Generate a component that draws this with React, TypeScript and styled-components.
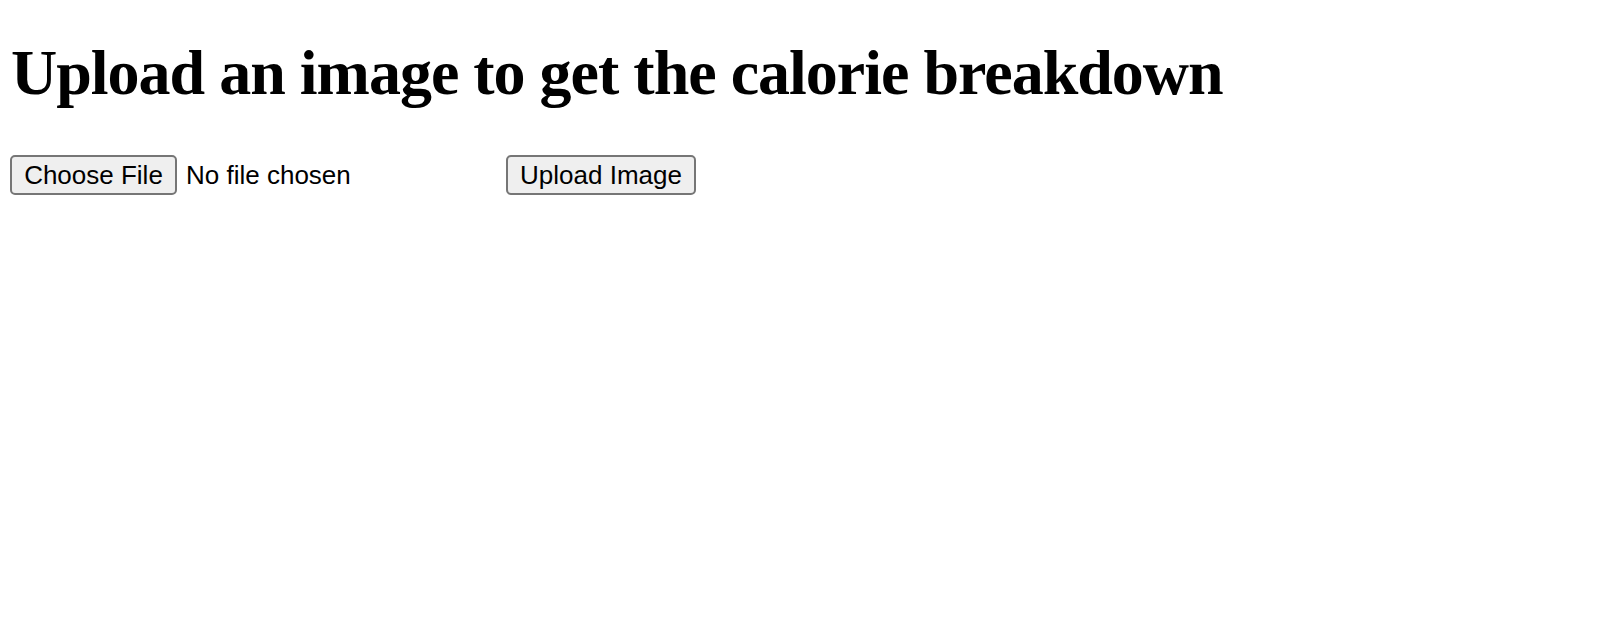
import React from "react";
import styled, { createGlobalStyle } from "styled-components";

const Global = createGlobalStyle`
  html, body { margin: 0; padding: 0; background: #ffffff; }
  body { font-family: "Liberation Serif", "Times New Roman", serif; color: #000; }
`;

const Page = styled.main`
  padding: 0 10px;
`;

const Title = styled.h1`
  margin: 36px 0 45px 1px;
  font-family: "Liberation Serif", "Times New Roman", serif;
  font-weight: 700;
  font-size: 64px;
  line-height: 74px;
  letter-spacing: -1px;
  white-space: nowrap;
`;

const Form = styled.form`
  display: flex;
  align-items: center;
  gap: 10px;
`;

const FilePicker = styled.label`
  display: flex;
  align-items: center;
  gap: 9px;
  width: 486px;
  cursor: pointer;
`;

const NativeInput = styled.input`
  display: none;
`;

const Button = styled.button<{ $w: number }>`
  box-sizing: border-box;
  width: ${(p) => p.$w}px;
  height: 40px;
  padding: 0;
  background: #efefef;
  border: 2px solid #767676;
  border-radius: 5px;
  font-family: "Liberation Sans", Arial, sans-serif;
  font-size: 26px;
  color: #000;
  line-height: 1;
  display: flex;
  align-items: center;
  justify-content: center;
  cursor: pointer;
`;

const FakeButton = styled(Button).attrs({ as: "span" })``;

const Status = styled.span`
  font-family: "Liberation Sans", Arial, sans-serif;
  font-size: 26px;
  color: #000;
`;

export default function App() {
  return (
    <>
      <Global />
      <Page>
        <Title>Upload an image to get the calorie breakdown</Title>
        <Form onSubmit={(e) => e.preventDefault()}>
          <FilePicker>
            <NativeInput type="file" accept="image/*" />
            <FakeButton $w={167}>Choose File</FakeButton>
            <Status>No file chosen</Status>
          </FilePicker>
          <Button type="submit" $w={190}>Upload Image</Button>
        </Form>
      </Page>
    </>
  );
}
